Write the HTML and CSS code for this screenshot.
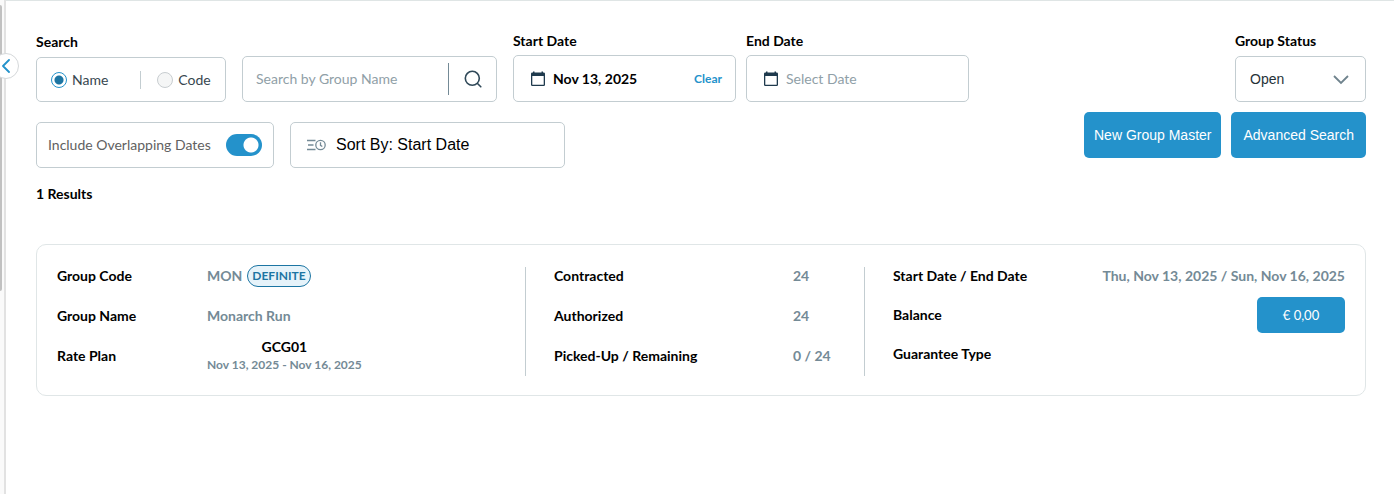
FILE: index.html
```html
<!DOCTYPE html>
<html lang="en">
<head>
<meta charset="utf-8">
<title>Group search</title>
<link rel="stylesheet" href="styles.css">
</head>
<body>
<aside class="rail">
  <div class="rail-thumb"></div>
  <button class="collapse" type="button" aria-label="Collapse panel">
    <svg width="10" height="14" viewBox="0 0 10 14" fill="none" stroke="#2492cb" stroke-width="1.8" stroke-linecap="round" stroke-linejoin="round"><path d="M8 1 2 7l6 6"/></svg>
  </button>
</aside>
<main class="page">
  <section class="toolbar">
    <div class="filters">
      <div class="filter-row">
        <div class="field search-type" role="radiogroup" aria-labelledby="search-label">
          <span class="label" id="search-label">Search</span>
          <div class="box radios">
            <label class="radio"><input type="radio" name="by" checked>Name</label>
            <label class="radio radio-split"><input type="radio" name="by">Code</label>
          </div>
        </div>
        <div class="box search-box">
          <input class="text" type="text" placeholder="Search by Group Name" aria-label="Search by Group Name">
          <button class="search-go" type="button" aria-label="Search">
            <svg width="18" height="18" viewBox="0 0 18 18" fill="none" stroke="#2f4858" stroke-width="1.6" stroke-linecap="round"><circle cx="8.300" cy="8.300" r="7"/><path d="m13.500 13.500 3.300 3.300"/></svg>
          </button>
        </div>
        <div class="dates">
          <div class="field date">
            <label class="label" for="start">Start Date</label>
            <div class="box date-box">
              <svg width="14" height="16" viewBox="0 0 14 16"><path fill="#1f3a4d" fill-rule="evenodd" d="M2 .5h1.500V1.500h7V.5H12v1h.7A1.300 1.300 0 0 1 14 2.800v10.900a1.300 1.300 0 0 1-1.300 1.300H1.300A1.300 1.300 0 0 1 0 13.700V2.800A1.300 1.300 0 0 1 1.300 1.500H2zM1.300 5v8.700h11.400V5z"/></svg>
              <input class="text date-text" id="start" type="text" value="Nov 13, 2025">
              <button class="clear" type="button">Clear</button>
            </div>
          </div>
          <div class="field date">
            <label class="label" for="end">End Date</label>
            <div class="box date-box">
              <svg width="14" height="16" viewBox="0 0 14 16"><path fill="#1f3a4d" fill-rule="evenodd" d="M2 .5h1.500V1.500h7V.5H12v1h.7A1.300 1.300 0 0 1 14 2.800v10.900a1.300 1.300 0 0 1-1.300 1.300H1.300A1.300 1.300 0 0 1 0 13.700V2.800A1.300 1.300 0 0 1 1.300 1.500H2zM1.300 5v8.700h11.400V5z"/></svg>
              <input class="text date-text" id="end" type="text" placeholder="Select Date">
            </div>
          </div>
        </div>
      </div>
      <div class="filter-row">
        <label class="box overlap">Include Overlapping Dates<input class="switch" type="checkbox" role="switch" checked></label>
        <button class="box sort" type="button">
          <svg width="20" height="12" viewBox="0 0 20 12" fill="none" stroke="#748a96" stroke-width="1.300"><path d="M0 1.500h8.500M1 6h5.500M0 10.500h8.500"/><circle cx="13.500" cy="6" r="4.700"/><path d="M13.500 3.200V6.300l1.800 1.200"/></svg>
          Sort By: Start Date
        </button>
      </div>
    </div>
    <div class="actions">
      <div class="field status">
        <label class="label" for="status">Group Status</label>
        <div class="select-wrap">
          <select class="box select" id="status"><option>Open</option><option>Closed</option></select>
          <svg class="chevron" width="16" height="10" viewBox="0 0 16 10" fill="none" stroke="#6f838d" stroke-width="1.800"><path d="m1 1 7 7 7-7"/></svg>
        </div>
      </div>
      <div class="buttons">
        <button class="btn" type="button">New Group Master</button>
        <button class="btn btn-wide" type="button">Advanced Search</button>
      </div>
    </div>
  </section>
  <h2 class="results">1 Results</h2>
  <article class="card">
    <dl class="col">
      <div class="row"><dt>Group Code</dt><dd class="code">MON <span class="badge">DEFINITE</span></dd></div>
      <div class="row"><dt>Group Name</dt><dd>Monarch Run</dd></div>
      <div class="row"><dt>Rate Plan</dt><dd class="rate"><span class="rate-code">GCG01</span><span class="rate-dates">Nov 13, 2025 - Nov 16, 2025</span></dd></div>
    </dl>
    <div class="divider"></div>
    <dl class="col col-counts">
      <div class="row"><dt>Contracted</dt><dd>24</dd></div>
      <div class="row"><dt>Authorized</dt><dd>24</dd></div>
      <div class="row"><dt>Picked-Up / Remaining</dt><dd>0 / 24</dd></div>
    </dl>
    <div class="divider"></div>
    <dl class="col col-stay">
      <div class="row"><dt>Start Date / End Date</dt><dd>Thu, Nov 13, 2025 / Sun, Nov 16, 2025</dd></div>
      <div class="row"><dt>Balance</dt><dd><button class="btn balance" type="button">€ 0,00</button></dd></div>
      <div class="row"><dt>Guarantee Type</dt><dd></dd></div>
    </dl>
  </article>
</main>
</body>
</html>
```
FILE: styles.css
```css
* { box-sizing: border-box; }
body {
  margin: 0;
  min-height: 100vh;
  display: flex;
  background: #fff;
  color: #000;
  font: 14px/18px Lato, sans-serif;
}
button, input, select { font: inherit; color: inherit; margin: 0; }
button { cursor: pointer; padding: 0; border: 0; background: none; }

.rail {
  position: relative;
  flex: none;
  width: 6px;
  padding-top: 5px;
  background: #fafafa;
  border-right: 2px solid #e2e2e2;
}
.rail-thumb {
  width: 2px;
  height: 286px;
  background: #c1c1c1;
  border-radius: 0 2px 2px 0;
}
.collapse {
  position: absolute;
  top: 53px;
  left: -7px;
  width: 26px;
  height: 26px;
  display: flex;
  align-items: center;
  justify-content: center;
  border: 1px solid #d5d8da;
  border-radius: 50%;
  background: #fff;
}

.page {
  flex: 1;
  min-width: 0;
  padding: 31px 28px 0 30px;
  border-top: 1px solid #dfe5e5;
}
.toolbar { display: flex; justify-content: space-between; gap: 16px; }
.filters { display: flex; flex-direction: column; gap: 20px; }
.filter-row { display: flex; align-items: flex-end; gap: 16px; }
.label { font-weight: 700; }
.field { display: flex; flex-direction: column; gap: 6px; }
.box {
  height: 46px;
  display: flex;
  align-items: center;
  border: 1px solid #c3cdd1;
  border-radius: 5px;
  background: #fff;
}

.radios { width: 190px; height: 45px; padding-left: 14px; }
.radio { display: flex; align-items: center; gap: 5px; color: #37474f; }
.radio-split {
  margin-left: 32px;
  padding-left: 16px;
  border-left: 1px solid #c3cdd1;
}
.radio input {
  appearance: none;
  width: 16px;
  height: 16px;
  border: 1px solid #c8cdd0;
  border-radius: 50%;
  background: #f5f6f6;
}
.radio input:checked {
  border-color: #2492cb;
  background: radial-gradient(circle, #1c75a3 4px, #fff 5px);
}

.text {
  flex: 1;
  min-width: 0;
  padding: 0;
  border: 0;
  outline: 0;
  background: none;
}
.text::placeholder { color: #90a0a7; opacity: 1; }
.search-box { width: 255px; padding-left: 13px; }
.search-go {
  width: 48px;
  height: 32px;
  display: flex;
  align-items: center;
  justify-content: center;
  border-left: 1px solid #748a96;
}

.dates { display: flex; gap: 10px; }
.date { gap: 5px; }
.date-box { width: 223px; padding: 0 13px 0 17px; gap: 8px; height: 47px; }
.date-text { font-weight: 700; }
.date-text::placeholder { font-weight: 400; }
.clear { color: #2492cb; font-size: 12px; font-weight: 700; }

.overlap { width: 238px; padding: 0 11px; justify-content: space-between; color: #616161; }
.switch {
  appearance: none;
  width: 36px;
  height: 22px;
  border-radius: 11px;
  background: radial-gradient(circle at 25px 11px, #fff 7px, #2492cb 8px);
}
.sort {
  width: 275px;
  padding-left: 16px;
  gap: 9px;
  border: 1px solid #c3cdd1;
  background: #fff;
  font: 16px/18px "Liberation Sans", Arial, sans-serif;
}

.actions { display: flex; flex-direction: column; align-items: flex-end; gap: 10px; }
.status { width: 131px; }
.select-wrap { position: relative; }
.select {
  appearance: none;
  width: 100%;
  padding: 0 14px;
  color: #263238;
  font-family: "Liberation Sans", Arial, sans-serif;
}
.chevron { position: absolute; right: 17px; top: 19px; pointer-events: none; }
.buttons { display: flex; gap: 10px; }
.btn {
  height: 46px;
  padding: 0 10px;
  border-radius: 5px;
  background: #2492cb;
  color: #fff;
  font-family: "Liberation Sans", Arial, sans-serif;
}
.btn-wide { padding: 0 12px; }

.results { margin: 17px 0 41px; font-size: 14px; line-height: 18px; }

.card {
  display: flex;
  padding: 11px 20px 19px;
  border: 1px solid #e0e6e7;
  border-radius: 10px;
}
.col { flex: 468 1 0; margin: 0; }
.col-counts { flex-grow: 310; padding-left: 28px; }
.col-stay { flex-grow: 452; padding-left: 28px; }
.row { display: flex; align-items: center; height: 40px; }
.row dt { width: 150px; font-weight: 700; }
.row dd { margin: 0; color: #748a96; font-weight: 700; }
.col-counts dt { width: 239px; }
.col-stay .row { height: 39px; justify-content: space-between; }
.divider { width: 1px; margin-top: 11px; background: #c3cdd1; }
.code { display: flex; align-items: center; gap: 5px; }
.badge {
  height: 22px;
  padding: 0 4px;
  border: 1px solid #1c75a3;
  border-radius: 11px;
  background: #e6f3fa;
  color: #1c75a3;
  font-size: 12px;
  line-height: 20px;
}
.rate { display: flex; flex-direction: column; align-items: center; }
.rate-code { color: #000; }
.rate-dates { font-size: 12px; }
.balance { width: 88px; height: 36px; font: 13px/18px Lato, sans-serif; }
```
